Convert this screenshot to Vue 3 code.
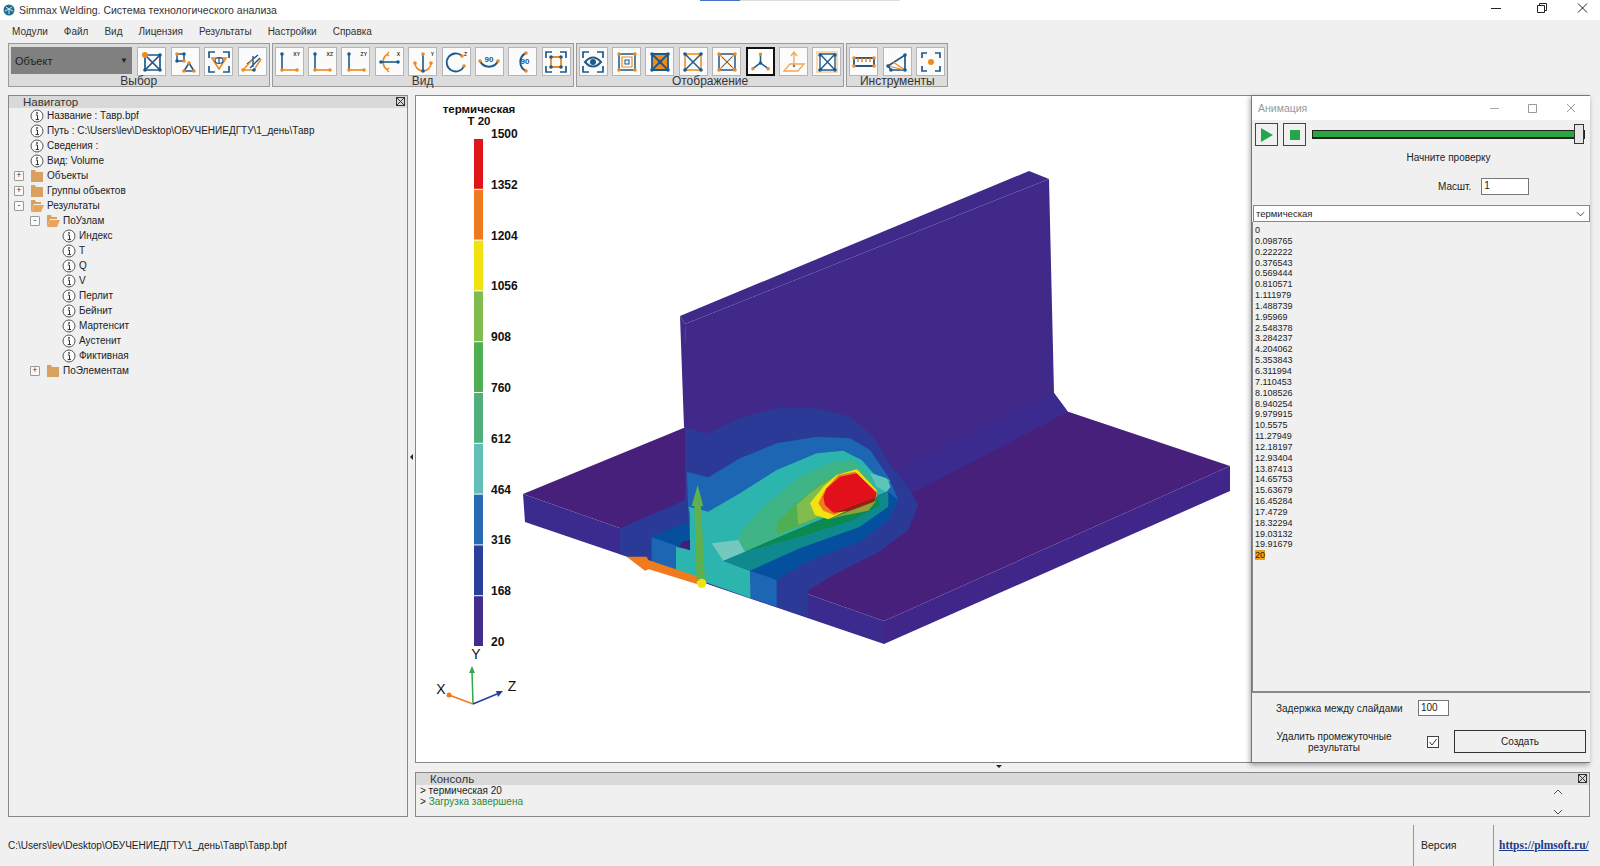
<script setup>
const N = '#1d5a8c'
const O = '#ef8b1e'

const line = (d, c = N, w = 1.5) => ({ d, stroke: c, fill: 'none', w })
const fill = (d, c) => ({ d, stroke: 'none', fill: c, w: 0 })
const dot = (x, y, c = N, r = 1.8) =>
	fill(`M${x - r} ${y}a${r} ${r} 0 1 0 ${2 * r} 0a${r} ${r} 0 1 0 ${-2 * r} 0`, c)
const cornerDots = (c, a = 4, b = 20) => [dot(a, a, c), dot(b, a, c), dot(a, b, c), dot(b, b, c)]
const brackets = line('M2 8V2H8M16 2H22V8M22 16V22H16M8 22H2V16', N, 1.7)
const axis = (label) => ({
	parts: [line('M5 4V20', N, 1.6), line('M5 20H20', O, 1.6), dot(5, 4, N), dot(20, 20, O), dot(5, 20, O)],
	label,
})

const selectTools = [
	{ parts: [line('M5 5H20V20H5ZM5 5L20 20M20 5L5 20', N, 1.7), ...cornerDots(N, 5, 20), dot(5, 5, O, 3)] },
	{ parts: [line('M4 4H11V11H4Z', N, 1.5), dot(4, 4, O), dot(11, 4, N), dot(4, 11, N), dot(11, 11, O), line('M16 13L21 21H11Z', N, 1.6), dot(16, 13, O), dot(21, 21, O), dot(11, 21, O)] },
	{ parts: [brackets, line('M5 8H19L12 19Z', O, 1.7), line('M8 10.5a4 3 0 0 1 8 0a4 3 0 0 1 -8 0M12 7.5V13.5', N, 1.2)] },
	{ parts: [line('M3 20H14L21 9', O, 1.5), line('M7 14L18 5M10 18L20 8M13 6V17', N, 1.4), line('M3 20L12 10', O, 1.5), dot(3, 20, O), dot(14, 20, N)] },
]
const viewTools = [
	axis('XY'),
	axis('XZ'),
	axis('ZY'),
	{ parts: [line('M11 4A9 9 0 0 0 11 20', O, 1.7), line('M4 12H21', N, 1.6), line('M10 4L12 2M10 4L12 6M10 20L12 18M10 20L12 22', O, 1.2), dot(4, 12, N), dot(21, 12, N)], label: 'X' },
	{ parts: [line('M4 13A8 8 0 0 0 20 13', O, 1.7), line('M12 4V21', N, 1.6), dot(12, 4, O), dot(12, 21, N), dot(4, 13, O), dot(20, 13, O)], label: 'Y' },
	{ parts: [line('M18 6A9 9 0 1 0 20 16', N, 1.8), dot(18, 6, O), dot(20, 16, O)], label: 'Z' },
	{ parts: [line('M3 11A10 10 0 0 0 21 11', N, 2), dot(3, 11, O), dot(21, 11, O), dot(12, 20, O, 0.1)], num: { x: 12, y: 12 } },
	{ parts: [line('M15 3A10 10 0 0 0 15 21', N, 2), dot(15, 3, O), dot(15, 21, O)], num: { x: 14, y: 14 } },
	{ parts: [brackets, line('M7 7H17V17H7Z', O, 1.8), ...cornerDots(N, 7, 17)] },
]
const showTools = [
	{ parts: [brackets, line('M4 12Q12 3 20 12Q12 21 4 12Z', N, 2), dot(12, 12, N, 3)] },
	{ parts: [line('M4 4H20V20H4Z', N, 1.5), line('M7 7H17V17H7Z', O, 1.2), line('M10 10H14V14H10Z', N, 1.1), ...cornerDots(O)] },
	{ parts: [fill('M4 4H20V20H4Z', O), line('M4 4H20V20H4ZM4 4L20 20M20 4L4 20', N, 1.8), ...cornerDots(N), dot(12, 12, N, 2.2)] },
	{ parts: [line('M4 4H20V20H4Z', O, 1.5), line('M4 4L20 20M20 4L4 20', N, 1.5), ...cornerDots(N)] },
	{ parts: [line('M4 4H20V20H4Z', N, 1.5), line('M4 4L20 20M20 4L4 20', O, 1.1), line('M7 7L17 17M17 7L7 17', N, 0.7), ...cornerDots(O)] },
	{ parts: [line('M12 4V13M12 13L4 19M12 13L20 19', N, 1.6), dot(12, 4, O), dot(4, 19, O), dot(20, 19, O), dot(12, 13, N)], active: true },
	{ parts: [line('M8 14H22L16 21H2Z', O, 1.3), line('M12 3V16', O, 1.3), line('M9 6L12 2L15 6', O, 1.3), dot(12, 16, N, 1.2)], faded: true },
	{ parts: [fill('M1 1H23V23H1Z', '#f7d9b2'), fill('M3 3H21V21H3Z', '#fff'), line('M5 4H20V20H5ZM5 4L20 20M20 4L5 20', N, 1.4), ...cornerDots(N, 5, 20)] },
]
const measureTools = [
	{ parts: [line('M2 8H22V16H2Z', N, 1.8), line('M6 8V12M10 8V12M14 8V12M18 8V12', O, 1.5), dot(2, 8, O), dot(22, 8, O), dot(2, 16, O), dot(22, 16, O)] },
	{ parts: [line('M3 16L20 5V20H6Z', N, 1.7), line('M3 16L20 20', O, 1.2), line('M8 12L20 20', O, 1.2), dot(3, 16, N), dot(20, 5, N), dot(20, 20, N), dot(6, 20, N)] },
	{ parts: [line('M3 8V3H8M16 3H21V8M21 16V21H16M8 21H3V16', N, 1.7), dot(12, 12, O, 3)] },
]

const toolGroups = [
	{ id: 'select', label: 'Выбор', tools: selectTools, hasCombo: true },
	{ id: 'view', label: 'Вид', tools: viewTools },
	{ id: 'show', label: 'Отображение', tools: showTools },
	{ id: 'measure', label: 'Инструменты', tools: measureTools },
]

const menuItems = ['Модули', 'Файл', 'Вид', 'Лицензия', 'Результаты', 'Настройки', 'Справка']

const treeRows = [
	{ icon: 'info', text: 'Название : Тавр.bpf', indent: 0 },
	{ icon: 'info', text: 'Путь : C:\\Users\\lev\\Desktop\\ОБУЧЕНИЕДГТУ\\1_день\\Тавр', indent: 0 },
	{ icon: 'info', text: 'Сведения :', indent: 0 },
	{ icon: 'info', text: 'Вид: Volume', indent: 0 },
	{ icon: 'folder', exp: '+', text: 'Объекты', indent: 0 },
	{ icon: 'folder', exp: '+', text: 'Группы объектов', indent: 0 },
	{ icon: 'open', exp: '-', text: 'Результаты', indent: 0 },
	{ icon: 'open', exp: '-', text: 'ПоУзлам', indent: 16 },
	{ icon: 'info', text: 'Индекс', indent: 32 },
	{ icon: 'info', text: 'T', indent: 32 },
	{ icon: 'info', text: 'Q', indent: 32 },
	{ icon: 'info', text: 'V', indent: 32 },
	{ icon: 'info', text: 'Перлит', indent: 32 },
	{ icon: 'info', text: 'Бейнит', indent: 32 },
	{ icon: 'info', text: 'Мартенсит', indent: 32 },
	{ icon: 'info', text: 'Аустенит', indent: 32 },
	{ icon: 'info', text: 'Фиктивная', indent: 32 },
	{ icon: 'folder', exp: '+', text: 'ПоЭлементам', indent: 16 },
]

const legendColors = ['#e2141b', '#f07b1f', '#f0e311', '#82bb4e', '#4fb053', '#4fb07e', '#62bfb7', '#2a6ab5', '#2a3f9a', '#432d8c']
const legendLabels = [1500, 1352, 1204, 1056, 908, 760, 612, 464, 316, 168, 20]

const timeSteps = [
	'0', '0.098765', '0.222222', '0.376543', '0.569444', '0.810571', '1.111979', '1.488739',
	'1.95969', '2.548378', '3.284237', '4.204062', '5.353843', '6.311994', '7.110453', '8.108526',
	'8.940254', '9.979915', '10.5575', '11.27949', '12.18197', '12.93404', '13.87413', '14.65753',
	'15.63679', '16.45284', '17.4729', '18.32294', '19.03132', '19.91679', '20',
]

// контуры температуры, координаты в масштабе x3 от точки (500,380)
const heatShapes = [
	['#2b3a96', '555,145 625,160 720,115 830,85 950,85 1050,110 1120,170 1165,245 1230,330 1255,375 1225,450 1130,520 1000,585 925,632 925,712 830,680 360,522 360,445 555,360'],
	['#05509e', '455,470 565,425 570,480 530,497 530,575 455,548'],
	['#1c66b4', '560,275 625,292 720,235 830,190 950,170 1050,175 1110,210 1165,290 1195,360 1160,340 670,542 625,500 570,510 565,380'],
	['#05509e', '750,572 830,600 920,545 1090,480 1165,420 1195,360 1165,335 670,542'],
	['#1c66b4', '455,472 530,497 530,575 455,548'],
	['#1c66b4', '750,572 830,600 830,680 752,655'],
	['#2bb5ae', '565,380 625,395 720,340 830,270 950,220 1030,212 1085,240 1120,280 1170,300 1160,335 670,542 750,572 752,655 640,615 528,575 528,500 570,510 570,400'],
	['#0e8a8e', '670,542 750,572 900,505 1080,440 1165,380 1165,335'],
	['#3fb486', '715,480 720,460 790,380 900,290 1000,245 1060,240 1110,290 1130,340 735,515'],
	['#4fb053', '830,430 890,370 960,310 1010,285 1075,268 1130,340 830,465'],
	['#0a8a4c', '735,515 1130,350 1140,375 1060,420 900,470'],
	['#82bb4e', '890,375 935,335 1010,285 1075,268 1130,340 895,435'],
	['#f0e311', '930,370 970,320 1010,285 1070,268 1130,330 1130,350 985,418 945,405'],
	['#f07b1f', '955,370 975,330 1015,285 1065,275 1130,335 1128,355 1002,405 970,392'],
	['#e2101a', '970,350 980,325 1020,290 1070,280 1130,340 1128,350 1000,398 975,375'],
	['#9e1a14', '1000,398 1128,350 1118,372 1050,392'],
	['#8fa03a', '985,418 1130,362 1105,392 1040,405'],
	['#75c8bd', '635,490 670,542 735,515 715,480'],
	['#5fc4b8', '1110,280 1160,295 1172,320 1160,335 1130,320'],
	['#3f1f7c', '545,485 570,480 570,510 540,500'],
]
</script>

<template>
	<div class="app">
		<div class="titlebar">
			<svg class="app-icon" viewBox="0 0 12 12">
				<circle cx="6" cy="6" r="5.5" fill="#1f6f8f" />
				<path d="M3 3l3 2 3-2M6 5v5M2 7l4-2 4 2" stroke="#cfe6ee" fill="none" />
			</svg>
			<span class="title-text">Simmax Welding. Система технологического анализа</span>
			<i class="task-strip"></i>
			<svg class="win-ctrl" viewBox="0 0 110 12">
				<path d="M0 6.5H10" stroke="#222" />
				<path d="M46.5 3.5h7v7h-7zM48.5 3.5v-2h7v7h-2" fill="none" stroke="#222" />
				<path d="M87 1.5l9 9M96 1.5l-9 9" stroke="#222" />
			</svg>
		</div>

		<div class="menubar">
			<span v-for="item in menuItems" :key="item">{{ item }}</span>
		</div>

		<div class="toolbar">
			<div v-for="group in toolGroups" :key="group.id" class="tool-group">
				<div class="tool-row">
					<div v-if="group.hasCombo" class="combo">
						<span>Объект</span>
						<b>▼</b>
					</div>
					<button
						v-for="(tool, i) in group.tools"
						:key="i"
						class="tool-btn"
						:class="{ active: tool.active }"
					>
						<svg viewBox="0 0 24 24" :class="{ faded: tool.faded }">
							<path
								v-for="(p, j) in tool.parts"
								:key="j"
								:d="p.d"
								:stroke="p.stroke"
								:fill="p.fill"
								:stroke-width="p.w"
							/>
							<text v-if="tool.label" x="23" y="6" text-anchor="end" class="icon-label">{{ tool.label }}</text>
							<text v-if="tool.num" :x="tool.num.x" :y="tool.num.y" text-anchor="middle" class="icon-num">90</text>
						</svg>
					</button>
				</div>
				<div class="group-label">{{ group.label }}</div>
			</div>
		</div>

		<div class="workspace">
			<section class="navigator">
				<header class="panel-head">
					<span>Навигатор</span>
					<i class="panel-close"></i>
				</header>
				<div class="tree">
					<div
						v-for="row in treeRows"
						:key="row.text"
						class="tree-row"
						:style="{ paddingLeft: row.indent + 'px' }"
					>
						<span class="expander" :class="{ empty: !row.exp }">{{ row.exp }}</span>
						<svg v-if="row.icon === 'info'" class="row-icon" viewBox="0 0 14 14">
							<circle cx="7" cy="7" r="6" fill="#fff" stroke="#555" />
							<circle cx="7" cy="3.9" r="0.9" fill="#333" />
							<path d="M5.8 6h1.7v4.6M5.6 10.6h3.4" stroke="#333" fill="none" />
						</svg>
						<svg v-else-if="row.icon === 'folder'" class="row-icon" viewBox="0 0 14 14">
							<path d="M1 1h4l1 2h7v10H1z" fill="#d9a160" />
						</svg>
						<svg v-else class="row-icon" viewBox="0 0 14 14">
							<path d="M1 1h4l1 2h5v2H4l-3 8z" fill="#d9a160" />
							<path d="M4 6h10l-3 7H1z" fill="#e8a45c" />
						</svg>
						<span class="row-text">{{ row.text }}</span>
					</div>
				</div>
				<i class="side-handle"></i>
			</section>

			<div class="right-col">
				<section class="viewport">
					<svg class="scene" viewBox="416 96 1173 666" preserveAspectRatio="none">
						<!-- шкала -->
						<text x="479" y="113" text-anchor="middle" class="legend-title">термическая</text>
						<text x="479" y="125" text-anchor="middle" class="legend-title">T 20</text>
						<rect
							v-for="(c, i) in legendColors"
							:key="c"
							x="474"
							:y="139 + i * 50.8"
							width="9"
							height="49.8"
							:fill="c"
						/>
						<text
							v-for="(v, i) in legendLabels"
							:key="v"
							x="491"
							:y="138 + i * 50.8"
							class="legend-num"
						>{{ v }}</text>

						<!-- тавр -->
						<polygon points="523,494 686,427 1069,412 1230,466 884,621" fill="#46207b" />
						<polygon points="523,494 884,621 884,644 525,522" fill="#3b2b8f" />
						<polygon points="884,621 1230,466 1230,491 884,644" fill="#41268a" />
						<polygon points="680,316 1029,171 1049,179 685,324" fill="#3f2a8a" />
						<polygon points="680,316 685,324 690,432 684,427" fill="#3f2a8a" />
						<polygon points="685,324 1049,179 1054,393 1068,412 885,490 760,560 690,550" fill="#41298a" />
						<polygon points="885,476 1054,393 1068,412 905,497" fill="#3c2b8e" />

						<g transform="translate(500 380) scale(0.3333)">
							<polygon v-for="(s, i) in heatShapes" :key="i" :fill="s[0]" :points="s[1]" />
							<polygon fill="#f07b1f" points="595,590 445,540 440,530 380,530 435,572 447,568 590,612" />
							<polygon fill="#5fb04f" points="593,315 575,378 583,378 590,600 615,600 603,378 610,378" />
							<circle cx="605" cy="610" r="14" fill="#f0e311" />
						</g>

						<!-- оси -->
						<path d="M473 704L472 672" stroke="#2fa84a" stroke-width="1.5" />
						<path d="M472 666l-3 7h6z" fill="#2fa84a" />
						<path d="M473 704L449 695" stroke="#f07b1f" stroke-width="1.5" />
						<circle cx="449" cy="695" r="2.5" fill="#f07b1f" />
						<path d="M473 704L497 694" stroke="#2a3f9a" stroke-width="1.5" />
						<path d="M503 691l-7 0 2 6z" fill="#2a3f9a" />
						<text x="476" y="659" text-anchor="middle" class="axis-name">Y</text>
						<text x="441" y="694" text-anchor="middle" class="axis-name">X</text>
						<text x="512" y="691" text-anchor="middle" class="axis-name">Z</text>
					</svg>

					<div class="anim-window">
						<div class="anim-title">
							<span>Анимация</span>
							<svg class="anim-ctrl" viewBox="0 0 86 12">
								<path d="M0 6.5H9" stroke="#aaa" />
								<path d="M38.5 2.5h8v8h-8z" fill="none" stroke="#999" />
								<path d="M77 2l8 8M85 2l-8 8" stroke="#999" />
							</svg>
						</div>
						<div class="player">
							<button class="play-btn"><i class="play-icon"></i></button>
							<button class="play-btn"><i class="stop-icon"></i></button>
							<div class="slider"><i class="thumb"></i></div>
						</div>
						<div class="hint">Начните проверку</div>
						<div class="scale-row">
							<span>Масшт.</span>
							<div class="field scale-field">1</div>
						</div>
						<div class="select-box">
							<span>термическая</span>
							<svg viewBox="0 0 10 6"><path d="M1 1l4 4 4-4" fill="none" stroke="#333" /></svg>
						</div>
						<div class="steps">
							<div v-for="t in timeSteps" :key="t" class="step">
								<span :class="{ current: t === '20' }">{{ t }}</span>
							</div>
						</div>
						<div class="anim-foot">
							<div class="delay-row">
								<span>Задержка между слайдами</span>
								<div class="field delay-field">100</div>
							</div>
							<div class="create-row">
								<span class="cleanup">Удалить промежуточные<br />результаты</span>
								<svg class="checkbox" viewBox="0 0 12 12">
									<rect x="0.5" y="0.5" width="11" height="11" fill="#fff" stroke="#444" />
									<path d="M2.5 6l2.5 3 4.5-6" fill="none" stroke="#333" />
								</svg>
								<button class="create-btn">Создать</button>
							</div>
						</div>
					</div>
				</section>

				<i class="bottom-handle"></i>

				<section class="console">
					<header class="panel-head console-head">
						<span>Консоль</span>
						<i class="panel-close"></i>
					</header>
					<div class="console-body">
						<div class="console-lines">
							<div>&gt; термическая 20</div>
							<div><span>&gt;</span> <span class="ok">Загрузка завершена</span></div>
						</div>
						<svg class="console-scroll" viewBox="0 0 10 26">
							<path d="M1 5l4-4 4 4M1 21l4 4 4-4" fill="none" stroke="#555" />
						</svg>
					</div>
				</section>
			</div>
		</div>

		<footer class="statusbar">
			<span class="status-path">C:\Users\lev\Desktop\ОБУЧЕНИЕДГТУ\1_день\Тавр\Тавр.bpf</span>
			<span class="status-ver">Версия 2.0.2.10</span>
			<a class="status-link">https://plmsoft.ru/</a>
		</footer>
	</div>
</template>

<style scoped>
.app {
	width: 1600px;
	height: 866px;
	overflow: hidden;
	display: flex;
	flex-direction: column;
	background: #f0f0f0;
	font-family: 'Liberation Sans', Arial, sans-serif;
	font-size: 10px;
	color: #222;
}

.titlebar {
	position: relative;
	height: 20px;
	flex: none;
	background: #fff;
	display: flex;
	align-items: center;
	padding-left: 3px;
}

.app-icon {
	width: 12px;
	height: 12px;
	margin-right: 4px;
}

.title-text {
	font-size: 10.5px;
	color: #333;
}

.task-strip {
	position: absolute;
	left: 700px;
	top: 0;
	width: 200px;
	height: 1px;
	background: linear-gradient(90deg, #4472c4 20%, #ddd 20%);
}

.win-ctrl {
	position: absolute;
	left: 1491px;
	top: 2px;
	width: 110px;
	height: 12px;
}

.menubar {
	height: 23px;
	flex: none;
	display: flex;
	align-items: center;
	gap: 16px;
	padding-left: 12px;
	font-size: 10px;
	color: #333;
}

.toolbar {
	height: 44px;
	flex: none;
	display: flex;
	gap: 2px;
	padding-left: 8px;
}

.tool-group {
	background: #dcdcdc;
	border: 1px solid #9a9a9a;
	padding: 3px 2px 0;
}

.tool-row {
	display: flex;
	gap: 4.4px;
}

.group-label {
	text-align: center;
	font-size: 12px;
	line-height: 11px;
	height: 11px;
	color: #333;
}

.combo {
	width: 121px;
	height: 27px;
	background: #808080;
	display: flex;
	justify-content: space-between;
	align-items: center;
	padding: 0 4px;
	box-sizing: border-box;
	font-size: 11px;
	margin-right: 1px;
}

.combo b {
	font-size: 8px;
}

.tool-btn {
	width: 29px;
	height: 29px;
	box-sizing: border-box;
	padding: 1px;
	background: #fbfbfb;
	border: 1px solid #b5b5b5;
	display: flex;
	align-items: center;
	justify-content: center;
}

.tool-btn svg {
	width: 24px;
	height: 24px;
}

.tool-btn .faded {
	opacity: 0.75;
}

.tool-btn.active {
	border: 2px solid #111;
	background: #fff;
}

.icon-label {
	font-size: 5px;
	font-weight: bold;
	fill: #333;
}

.icon-num {
	font-size: 8px;
	font-weight: bold;
	fill: #1d5a8c;
}

.workspace {
	margin-top: 8px;
	height: 722px;
	flex: none;
	display: flex;
	gap: 7px;
	padding-left: 8px;
}

.navigator {
	position: relative;
	width: 400px;
	box-sizing: border-box;
	border: 1px solid #888;
	display: flex;
	flex-direction: column;
}

.panel-head {
	position: relative;
	height: 12px;
	flex: none;
	background: #d9d9d9;
	padding-left: 14px;
	font-size: 11.5px;
	line-height: 12px;
	color: #333;
}

.panel-close {
	position: absolute;
	right: 2px;
	top: 1px;
	width: 7px;
	height: 7px;
	border: 1px solid #333;
	background: linear-gradient(45deg, transparent 44%, #333 44%, #333 56%, transparent 56%),
		linear-gradient(-45deg, transparent 44%, #333 44%, #333 56%, transparent 56%);
}

.tree {
	padding-top: 0;
}

.tree-row {
	height: 15px;
	display: flex;
	align-items: center;
	box-sizing: content-box;
	margin-left: 5px;
}

.expander {
	width: 8px;
	height: 8px;
	flex: none;
	margin: 0 6px 0 0;
	border: 1px solid #999;
	border-radius: 1px;
	background: #fafafa;
	color: #345;
	font-size: 9px;
	line-height: 7px;
	text-align: center;
}

.expander.empty {
	visibility: hidden;
}

.row-icon {
	width: 14px;
	height: 14px;
	flex: none;
}

.row-text {
	margin-left: 3px;
	white-space: nowrap;
}

.side-handle {
	position: absolute;
	right: -6px;
	top: 358px;
	border: 3px solid transparent;
	border-right-color: #222;
	border-left-width: 0;
}

.right-col {
	position: relative;
	width: 1175px;
	display: flex;
	flex-direction: column;
}

.viewport {
	position: relative;
	height: 668px;
	box-sizing: border-box;
	flex: none;
	background: #fff;
	border: 1px solid #888;
}

.scene {
	display: block;
	width: 100%;
	height: 100%;
}

.legend-title {
	font-size: 11.5px;
	font-weight: bold;
	fill: #111;
}

.legend-num {
	font-size: 12px;
	font-weight: bold;
	fill: #111;
}

.axis-name {
	font-size: 14px;
	fill: #111;
}

.anim-window {
	position: absolute;
	right: -1px;
	top: -1px;
	bottom: -1px;
	width: 339px;
	box-sizing: border-box;
	background: #f0f0f0;
	border: 1px solid #777;
	border-right: 0;
	box-shadow: -1px 2px 5px rgba(0, 0, 0, 0.35);
	display: flex;
	flex-direction: column;
}

.anim-title {
	height: 24px;
	flex: none;
	background: #fff;
	display: flex;
	align-items: center;
	justify-content: space-between;
	padding: 0 14px 0 6px;
	font-size: 10.5px;
	color: #999;
}

.anim-ctrl {
	width: 86px;
	height: 12px;
}

.player {
	display: flex;
	align-items: center;
	gap: 5px;
	padding: 3px 5px 0 3px;
	height: 23px;
	flex: none;
}

.play-btn {
	width: 23px;
	height: 23px;
	padding: 0;
	background: #f0f0f0;
	border: 1px solid #444;
	display: flex;
	align-items: center;
	justify-content: center;
}

.play-icon {
	border-left: 12px solid #22a84a;
	border-top: 7px solid transparent;
	border-bottom: 7px solid transparent;
}

.stop-icon {
	width: 10px;
	height: 10px;
	background: #22a84a;
}

.slider {
	position: relative;
	flex: 1;
	margin-left: 1px;
	height: 6px;
	background: #2aa63e;
	border: 1px solid #222;
	border-bottom-width: 2px;
}

.thumb {
	position: absolute;
	right: 0;
	top: -7px;
	width: 8px;
	height: 18px;
	background: #e6e6e6;
	border: 1px solid #333;
}

.hint {
	margin-top: 6px;
	height: 12px;
	line-height: 12px;
	text-align: center;
	padding-left: 53px;
	padding-right: 0;
	width: 340px;
	box-sizing: border-box;
}

.scale-row {
	display: flex;
	align-items: center;
	gap: 10px;
	margin-top: 14px;
	padding-left: 186px;
	height: 17px;
	flex: none;
}

.field {
	box-sizing: border-box;
	height: 17px;
	line-height: 14px;
	padding-left: 2px;
	background: #fff;
	border: 1px solid #777;
	font-size: 10px;
}

.scale-field {
	width: 48px;
}

.select-box {
	margin-top: 10px;
	height: 17px;
	flex: none;
	box-sizing: border-box;
	margin-left: 1px;
	padding: 0 4px 0 2px;
	background: #fff;
	border: 1px solid #888;
	display: flex;
	align-items: center;
	justify-content: space-between;
	font-size: 9.5px;
}

.select-box svg {
	width: 9px;
	height: 6px;
}

.steps {
	flex: 1;
	padding: 3px 0 0 2px;
	border-left: 1px solid #888;
	border-bottom: 2px solid #888;
	font-size: 9px;
	color: #222;
}

.step {
	height: 10.85px;
	line-height: 10.85px;
}

.current {
	background: #f0a010;
}

.anim-foot {
	height: 69px;
	flex: none;
}

.delay-row {
	display: flex;
	align-items: center;
	padding-left: 24px;
	padding-top: 7px;
	height: 16px;
}

.delay-row span {
	width: 142px;
}

.delay-field {
	width: 31px;
	height: 16px;
}

.create-row {
	display: flex;
	align-items: center;
	margin-top: 14px;
}

.cleanup {
	width: 162px;
	margin-left: 1px;
	line-height: 11px;
	text-align: center;
}

.checkbox {
	width: 12px;
	height: 12px;
	margin-left: 12px;
}

.create-btn {
	width: 132px;
	height: 23px;
	margin-left: 15px;
	font: 10px 'Liberation Sans', Arial, sans-serif;
	color: #222;
	background: #f0f0f0;
	border: 1px solid #333;
}

.bottom-handle {
	position: absolute;
	left: 581px;
	top: 670px;
	border: 3px solid transparent;
	border-top-color: #222;
	border-bottom-width: 0;
}

.console {
	margin-top: 9px;
	flex: 1;
	box-sizing: border-box;
	border: 1px solid #888;
	display: flex;
	flex-direction: column;
}

.console-head {
	padding-left: 14px;
}

.console-body {
	flex: 1;
	display: flex;
	justify-content: space-between;
}

.console-lines {
	padding: 0 0 0 4px;
	line-height: 11px;
	font-size: 10px;
	color: #222;
}

.ok {
	color: #2a8a3a;
}

.console-scroll {
	width: 10px;
	height: 26px;
	margin: 4px 26px 0 0;
}

.statusbar {
	position: relative;
	flex: 1;
	display: flex;
	align-items: center;
	margin-top: 8px;
	padding: 0 0 2px 8px;
	font-size: 10px;
}

.status-path {
	flex: 1;
}

.status-ver {
	width: 80px;
	padding-left: 7px;
	box-sizing: border-box;
	border-left: 1px solid #999;
	line-height: 41px;
	height: 41px;
	font-size: 10.5px;
}

.status-link {
	width: 107px;
	padding-left: 5px;
	box-sizing: border-box;
	border-left: 1px solid #999;
	line-height: 41px;
	height: 41px;
	font: bold 11.5px/41px 'Liberation Serif', 'Times New Roman', serif;
	color: #1a3a8c;
	text-decoration: underline;
}
</style>
